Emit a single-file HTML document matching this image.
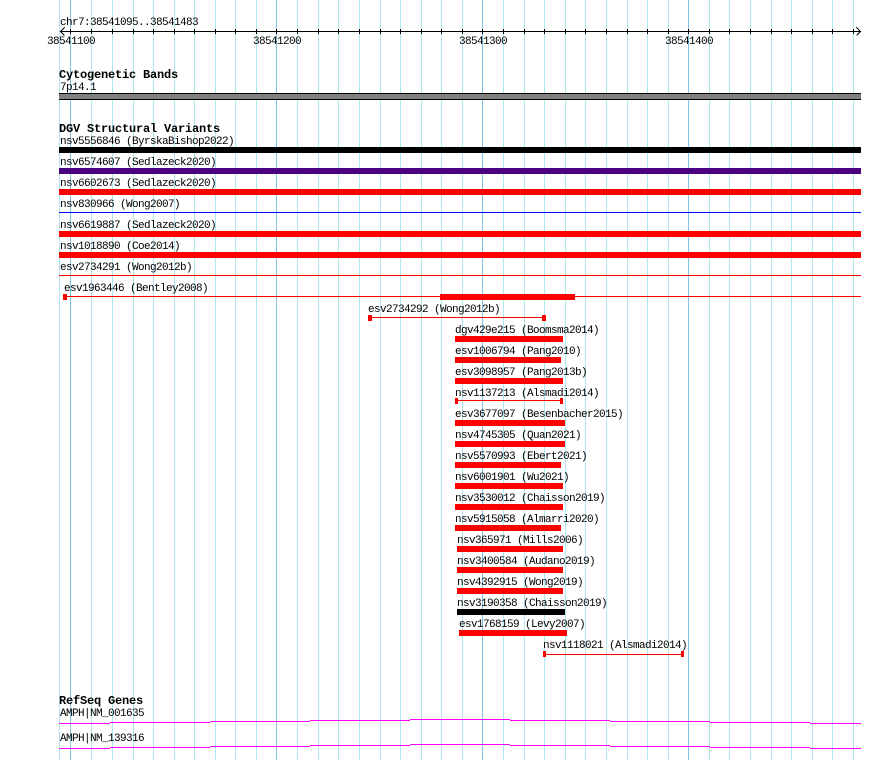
<!DOCTYPE html>
<html><head><meta charset="utf-8"><style>
html,body{margin:0;padding:0;background:#fff;}
svg{display:block;}
text{font-family:"Liberation Mono",monospace;font-size:11px;letter-spacing:-0.6px;fill:#000;}
.t{font-weight:bold;font-size:12px;letter-spacing:-0.2px;}
</style></head><body>
<svg width="890" height="760" xmlns="http://www.w3.org/2000/svg" shape-rendering="crispEdges">
<g stroke="#aee8ef" stroke-width="1">
<line x1="59.5" y1="0" x2="59.5" y2="760"/>
<line x1="91.5" y1="0" x2="91.5" y2="760"/><line x1="112.5" y1="0" x2="112.5" y2="760"/><line x1="133.5" y1="0" x2="133.5" y2="760"/><line x1="153.5" y1="0" x2="153.5" y2="760"/><line x1="174.5" y1="0" x2="174.5" y2="760"/><line x1="194.5" y1="0" x2="194.5" y2="760"/><line x1="215.5" y1="0" x2="215.5" y2="760"/><line x1="235.5" y1="0" x2="235.5" y2="760"/><line x1="256.5" y1="0" x2="256.5" y2="760"/>
<line x1="297.5" y1="0" x2="297.5" y2="760"/><line x1="318.5" y1="0" x2="318.5" y2="760"/><line x1="338.5" y1="0" x2="338.5" y2="760"/><line x1="359.5" y1="0" x2="359.5" y2="760"/><line x1="380.5" y1="0" x2="380.5" y2="760"/><line x1="400.5" y1="0" x2="400.5" y2="760"/><line x1="421.5" y1="0" x2="421.5" y2="760"/><line x1="441.5" y1="0" x2="441.5" y2="760"/><line x1="462.5" y1="0" x2="462.5" y2="760"/>
<line x1="503.5" y1="0" x2="503.5" y2="760"/><line x1="524.5" y1="0" x2="524.5" y2="760"/><line x1="544.5" y1="0" x2="544.5" y2="760"/><line x1="565.5" y1="0" x2="565.5" y2="760"/><line x1="585.5" y1="0" x2="585.5" y2="760"/><line x1="606.5" y1="0" x2="606.5" y2="760"/><line x1="627.5" y1="0" x2="627.5" y2="760"/><line x1="647.5" y1="0" x2="647.5" y2="760"/><line x1="668.5" y1="0" x2="668.5" y2="760"/>
<line x1="709.5" y1="0" x2="709.5" y2="760"/><line x1="729.5" y1="0" x2="729.5" y2="760"/><line x1="750.5" y1="0" x2="750.5" y2="760"/><line x1="771.5" y1="0" x2="771.5" y2="760"/><line x1="791.5" y1="0" x2="791.5" y2="760"/><line x1="812.5" y1="0" x2="812.5" y2="760"/><line x1="832.5" y1="0" x2="832.5" y2="760"/><line x1="853.5" y1="0" x2="853.5" y2="760"/>
</g>
<g stroke="#7fc4e8" stroke-width="1">
<line x1="70.5" y1="0" x2="70.5" y2="760"/><line x1="276.5" y1="0" x2="276.5" y2="760"/><line x1="482.5" y1="0" x2="482.5" y2="760"/><line x1="688.5" y1="0" x2="688.5" y2="760"/>
</g>
<!-- ruler -->
<text x="60" y="25">chr7:38541095..38541483</text>
<g stroke="#000" stroke-width="1">
<line x1="60" y1="31.5" x2="861" y2="31.5"/>
<path d="M64.5 27.5 L60.5 31.5 L64.5 35.5 M856.5 27.5 L860.5 31.5 L856.5 35.5" fill="none"/>
<path d="M70.5 29v5M91.5 29v5M112.5 29v5M133.5 29v5M153.5 29v5M174.5 29v5M194.5 29v5M215.5 29v5M235.5 29v5M256.5 29v5M276.5 29v5M297.5 29v5M318.5 29v5M338.5 29v5M359.5 29v5M380.5 29v5M400.5 29v5M421.5 29v5M441.5 29v5M462.5 29v5M482.5 29v5M503.5 29v5M524.5 29v5M544.5 29v5M565.5 29v5M585.5 29v5M606.5 29v5M627.5 29v5M647.5 29v5M668.5 29v5M688.5 29v5M709.5 29v5M729.5 29v5M750.5 29v5M771.5 29v5M791.5 29v5M812.5 29v5M832.5 29v5M853.5 29v5"/>
</g>
<text x="47" y="44">38541100</text>
<text x="253" y="44">38541200</text>
<text x="459" y="44">38541300</text>
<text x="665" y="44">38541400</text>
<!-- cyto -->
<text class="t" x="59" y="78">Cytogenetic Bands</text>
<text x="60" y="90">7p14.1</text>
<rect x="59" y="93" width="802" height="7" fill="#808080"/>
<rect x="59" y="93" width="802" height="1" fill="#000"/>
<rect x="59" y="99" width="802" height="1" fill="#000"/>
<!-- DGV -->
<text class="t" x="59" y="132">DGV Structural Variants</text>
<text x="60" y="144">nsv5556846 (ByrskaBishop2022)</text>
<rect x="59" y="147" width="802" height="6" fill="#000"/>
<text x="60" y="165">nsv6574607 (Sedlazeck2020)</text>
<rect x="59" y="168" width="802" height="6" fill="#4b0082"/>
<text x="60" y="186">nsv6602673 (Sedlazeck2020)</text>
<rect x="59" y="189" width="802" height="6" fill="#f00"/>
<text x="60" y="207">nsv830966 (Wong2007)</text>
<rect x="59" y="212" width="802" height="1" fill="#00f"/>
<text x="60" y="228">nsv6619887 (Sedlazeck2020)</text>
<rect x="59" y="231" width="802" height="6" fill="#f00"/>
<text x="60" y="249">nsv1018890 (Coe2014)</text>
<rect x="59" y="252" width="802" height="6" fill="#f00"/>
<text x="60" y="270">esv2734291 (Wong2012b)</text>
<rect x="59" y="275" width="802" height="1" fill="#f00"/>
<text x="64" y="291">esv1963446 (Bentley2008)</text>
<rect x="64" y="296" width="797" height="1" fill="#f00"/>
<rect x="63" y="294" width="4" height="6" fill="#f00"/>
<rect x="440" y="294" width="135" height="6" fill="#f00"/>
<text x="368" y="312">esv2734292 (Wong2012b)</text>
<rect x="369" y="317" width="176" height="1" fill="#f00"/>
<rect x="368" y="315" width="4" height="6" fill="#f00"/>
<rect x="542" y="315" width="4" height="6" fill="#f00"/>
<text x="455" y="333">dgv429e215 (Boomsma2014)</text>
<rect x="455" y="336" width="108" height="6" fill="#f00"/>
<text x="455" y="354">esv1006794 (Pang2010)</text>
<rect x="455" y="357" width="106" height="6" fill="#f00"/>
<text x="455" y="375">esv3098957 (Pang2013b)</text>
<rect x="455" y="378" width="108" height="6" fill="#f00"/>
<text x="455" y="396">nsv1137213 (Alsmadi2014)</text>
<rect x="455" y="400" width="108" height="1" fill="#f00"/>
<rect x="455" y="398" width="3" height="6" fill="#f00"/>
<rect x="560" y="398" width="3" height="6" fill="#f00"/>
<text x="455" y="417">esv3677097 (Besenbacher2015)</text>
<rect x="455" y="420" width="110" height="6" fill="#f00"/>
<text x="455" y="438">nsv4745305 (Quan2021)</text>
<rect x="455" y="441" width="110" height="6" fill="#f00"/>
<text x="455" y="459">nsv5570993 (Ebert2021)</text>
<rect x="455" y="462" width="106" height="6" fill="#f00"/>
<text x="455" y="480">nsv6001901 (Wu2021)</text>
<rect x="455" y="483" width="108" height="6" fill="#f00"/>
<text x="455" y="501">nsv3530012 (Chaisson2019)</text>
<rect x="455" y="504" width="108" height="6" fill="#f00"/>
<text x="455" y="522">nsv5915058 (Almarri2020)</text>
<rect x="455" y="525" width="106" height="6" fill="#f00"/>
<text x="457" y="543">nsv365971 (Mills2006)</text>
<rect x="457" y="546" width="106" height="6" fill="#f00"/>
<text x="457" y="564">nsv3400584 (Audano2019)</text>
<rect x="457" y="567" width="106" height="6" fill="#f00"/>
<text x="457" y="585">nsv4392915 (Wong2019)</text>
<rect x="457" y="588" width="106" height="6" fill="#f00"/>
<text x="457" y="606">nsv3190358 (Chaisson2019)</text>
<rect x="457" y="609" width="108" height="6" fill="#000"/>
<text x="459" y="627">esv1768159 (Levy2007)</text>
<rect x="459" y="630" width="108" height="6" fill="#f00"/>
<text x="543" y="648">nsv1118021 (Alsmadi2014)</text>
<rect x="544" y="654" width="139" height="1" fill="#f00"/>
<rect x="543" y="651" width="3" height="6" fill="#f00"/>
<rect x="681" y="651" width="3" height="6" fill="#f00"/>
<!-- RefSeq -->
<text class="t" x="59" y="704">RefSeq Genes</text>
<text x="60" y="716">AMPH|NM_001635</text>
<g fill="#f0f">
<rect x="59" y="723" width="51" height="1"/><rect x="110" y="722" width="100" height="1"/><rect x="210" y="721" width="100" height="1"/><rect x="310" y="720" width="100" height="1"/><rect x="410" y="719" width="100" height="1"/><rect x="510" y="720" width="100" height="1"/><rect x="610" y="721" width="100" height="1"/><rect x="710" y="722" width="100" height="1"/><rect x="810" y="723" width="51" height="1"/>
</g>
<text x="60" y="741">AMPH|NM_139316</text>
<g fill="#f0f">
<rect x="59" y="748" width="51" height="1"/><rect x="110" y="747" width="100" height="1"/><rect x="210" y="746" width="100" height="1"/><rect x="310" y="745" width="100" height="1"/><rect x="410" y="744" width="100" height="1"/><rect x="510" y="745" width="100" height="1"/><rect x="610" y="746" width="100" height="1"/><rect x="710" y="747" width="100" height="1"/><rect x="810" y="748" width="51" height="1"/>
</g>
</svg>
</body></html>
